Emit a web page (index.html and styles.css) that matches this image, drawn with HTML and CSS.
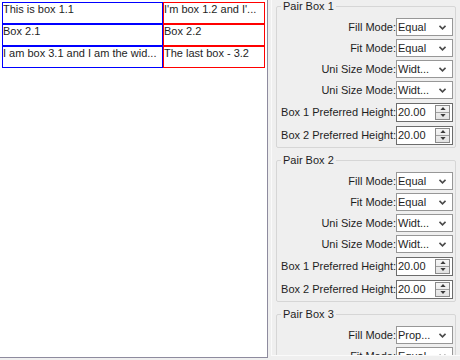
FILE: index.html
```html
<!DOCTYPE html>
<html>
<head>
<meta charset="utf-8">
<link rel="stylesheet" href="styles.css">
</head>
<body>
<div class="window">
  <div class="left">
    <div class="grid">
      <div class="cell blue">This is box 1.1</div>
      <div class="cell red">I'm box 1.2 and I'...</div>
      <div class="cell blue">Box 2.1</div>
      <div class="cell red">Box 2.2</div>
      <div class="cell blue">I am box 3.1 and I am the wid...</div>
      <div class="cell red">The last box - 3.2</div>
    </div>
  </div>
  <div class="right">
    <div class="scroll">
      <fieldset class="group">
        <legend>Pair Box 1</legend>
        <div class="row"><span class="lbl">Fill Mode:</span><div class="combo"><span>Equal</span><svg class="chev" width="7" height="5" viewBox="0 0 7 5"><polyline points="0.5,0.8 3.5,3.8 6.5,0.8"/></svg></div></div>
        <div class="row"><span class="lbl">Fit Mode:</span><div class="combo"><span>Equal</span><svg class="chev" width="7" height="5" viewBox="0 0 7 5"><polyline points="0.5,0.8 3.5,3.8 6.5,0.8"/></svg></div></div>
        <div class="row"><span class="lbl">Uni Size Mode:</span><div class="combo"><span>Widt...</span><svg class="chev" width="7" height="5" viewBox="0 0 7 5"><polyline points="0.5,0.8 3.5,3.8 6.5,0.8"/></svg></div></div>
        <div class="row"><span class="lbl">Uni Size Mode:</span><div class="combo"><span>Widt...</span><svg class="chev" width="7" height="5" viewBox="0 0 7 5"><polyline points="0.5,0.8 3.5,3.8 6.5,0.8"/></svg></div></div>
        <div class="row tall"><span class="lbl">Box 1 Preferred Height:</span><div class="spin"><span>20.00</span><div class="btns"><div class="btn"><svg width="7" height="4" viewBox="0 0 7 4"><polygon points="0,4 3.5,0 7,4"/></svg></div><div class="btn"><svg width="7" height="4" viewBox="0 0 7 4"><polygon points="0,0 3.5,4 7,0"/></svg></div></div></div></div>
        <div class="row tall"><span class="lbl">Box 2 Preferred Height:</span><div class="spin"><span>20.00</span><div class="btns"><div class="btn"><svg width="7" height="4" viewBox="0 0 7 4"><polygon points="0,4 3.5,0 7,4"/></svg></div><div class="btn"><svg width="7" height="4" viewBox="0 0 7 4"><polygon points="0,0 3.5,4 7,0"/></svg></div></div></div></div>
      </fieldset>
      <fieldset class="group">
        <legend>Pair Box 2</legend>
        <div class="row"><span class="lbl">Fill Mode:</span><div class="combo"><span>Equal</span><svg class="chev" width="7" height="5" viewBox="0 0 7 5"><polyline points="0.5,0.8 3.5,3.8 6.5,0.8"/></svg></div></div>
        <div class="row"><span class="lbl">Fit Mode:</span><div class="combo"><span>Equal</span><svg class="chev" width="7" height="5" viewBox="0 0 7 5"><polyline points="0.5,0.8 3.5,3.8 6.5,0.8"/></svg></div></div>
        <div class="row"><span class="lbl">Uni Size Mode:</span><div class="combo"><span>Widt...</span><svg class="chev" width="7" height="5" viewBox="0 0 7 5"><polyline points="0.5,0.8 3.5,3.8 6.5,0.8"/></svg></div></div>
        <div class="row"><span class="lbl">Uni Size Mode:</span><div class="combo"><span>Widt...</span><svg class="chev" width="7" height="5" viewBox="0 0 7 5"><polyline points="0.5,0.8 3.5,3.8 6.5,0.8"/></svg></div></div>
        <div class="row tall"><span class="lbl">Box 1 Preferred Height:</span><div class="spin"><span>20.00</span><div class="btns"><div class="btn"><svg width="7" height="4" viewBox="0 0 7 4"><polygon points="0,4 3.5,0 7,4"/></svg></div><div class="btn"><svg width="7" height="4" viewBox="0 0 7 4"><polygon points="0,0 3.5,4 7,0"/></svg></div></div></div></div>
        <div class="row tall"><span class="lbl">Box 2 Preferred Height:</span><div class="spin"><span>20.00</span><div class="btns"><div class="btn"><svg width="7" height="4" viewBox="0 0 7 4"><polygon points="0,4 3.5,0 7,4"/></svg></div><div class="btn"><svg width="7" height="4" viewBox="0 0 7 4"><polygon points="0,0 3.5,4 7,0"/></svg></div></div></div></div>
      </fieldset>
      <fieldset class="group">
        <legend>Pair Box 3</legend>
        <div class="row"><span class="lbl">Fill Mode:</span><div class="combo"><span>Prop...</span><svg class="chev" width="7" height="5" viewBox="0 0 7 5"><polyline points="0.5,0.8 3.5,3.8 6.5,0.8"/></svg></div></div>
        <div class="row"><span class="lbl">Fit Mode:</span><div class="combo"><span>Equal</span><svg class="chev" width="7" height="5" viewBox="0 0 7 5"><polyline points="0.5,0.8 3.5,3.8 6.5,0.8"/></svg></div></div>
        <div class="row"><span class="lbl">Uni Size Mode:</span><div class="combo"><span>Widt...</span><svg class="chev" width="7" height="5" viewBox="0 0 7 5"><polyline points="0.5,0.8 3.5,3.8 6.5,0.8"/></svg></div></div>
      </fieldset>
    </div>
  </div>
</div>
</body>
</html>
```
FILE: styles.css
```css
html, body {
  margin: 0;
  padding: 0;
  background: #efefef;
}
body {
  font-family: "Liberation Sans", Arial, sans-serif;
  font-size: 11px;
  color: #1e1e1e;
}
.window {
  display: flex;
  width: 460px;
  height: 360px;
  overflow: hidden;
}
.left {
  width: 265px;
  height: 355px;
  padding: 2px 0 0 2px;
  background: #ffffff;
  border-right: 1px solid #8e8b9e;
  border-bottom: 1px solid #8e8b9e;
  flex: none;
}
.grid {
  display: grid;
  grid-template-columns: 161px 102px;
  grid-auto-rows: 22px;
}
.cell {
  box-sizing: border-box;
  padding: 1px 0 0 0;
  line-height: 11px;
  white-space: nowrap;
  overflow: hidden;
}
.blue { border: 1px solid #0000ff; }
.red { border: 1px solid #ff0000; }
.right {
  flex: 1;
  padding-left: 3px;
}
.scroll {
  height: 356px;
  box-sizing: border-box;
  border-left: 1px solid #fafafa;
  border-bottom: 1px solid #fafafa;
  padding-left: 4px;
  overflow: hidden;
}
.group {
  margin: 0 0 6px 0;
  width: 180px;
  box-sizing: border-box;
  border: 1px solid #d6d6d6;
  border-radius: 2px;
  padding: 5px 2px 2px 0;
  display: flex;
  flex-direction: column;
  gap: 3px;
}
.group legend {
  margin-left: 4px;
  padding: 0 2px;
  line-height: 13px;
}
.row {
  display: flex;
  align-items: center;
  justify-content: flex-end;
  height: 18px;
}
.row.tall {
  height: 20px;
}
.lbl {
  white-space: nowrap;
}
.combo {
  width: 57px;
  height: 18px;
  box-sizing: border-box;
  border: 1px solid #979797;
  background: #ffffff;
  display: flex;
  align-items: center;
  justify-content: space-between;
  padding: 0 6px 0 1px;
}
.chev polyline {
  fill: none;
  stroke: #4a4a4a;
  stroke-width: 1.6;
}
.spin {
  width: 57px;
  height: 19px;
  box-sizing: border-box;
  border: 1px solid #6c6c6c;
  background: #ffffff;
  display: flex;
  align-items: center;
  justify-content: space-between;
  padding: 0 2px 0 1px;
}
.btns {
  width: 15px;
  height: 15px;
  box-sizing: border-box;
  border: 1px solid #8a8a8a;
  background: linear-gradient(#f6f6f6, #e2e2e2);
  display: flex;
  flex-direction: column;
}
.btn {
  flex: 1;
  display: flex;
  align-items: center;
  justify-content: center;
}
.btn + .btn {
  border-top: 1px solid #a0a0a0;
}
.btn polygon {
  fill: #3a3a3a;
}
.btn svg {
  width: 6px;
  height: 3px;
}
```
